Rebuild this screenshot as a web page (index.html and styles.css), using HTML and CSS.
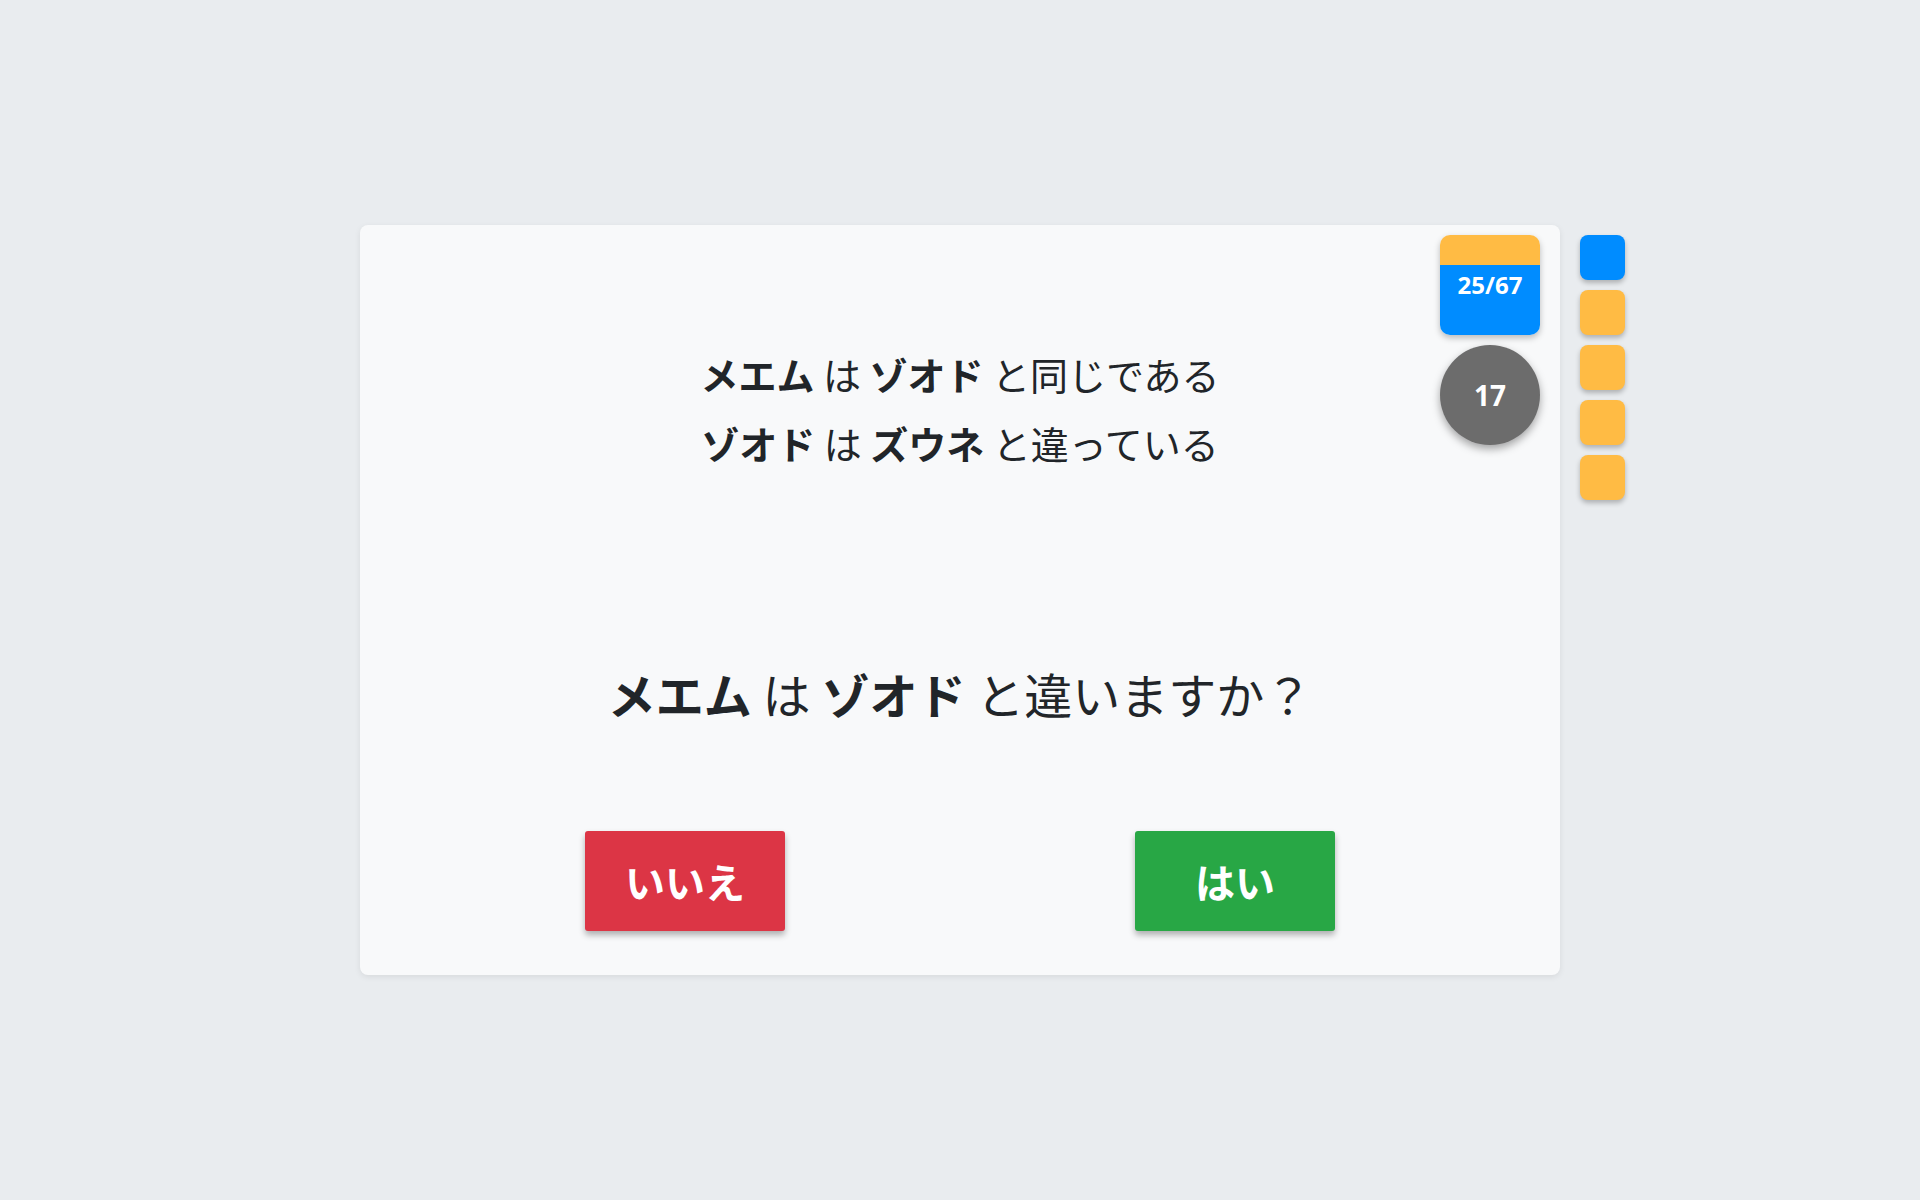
FILE: index.html
```html
<!DOCTYPE html>
<html lang="ja">
<head>
<meta charset="utf-8">
<title>Quiz</title>
<link rel="stylesheet" href="styles.css">
</head>
<body>
<div class="stage">
  <div class="spacer"></div>
  <div class="card">
    <div class="statements">
      <div class="line"><b>メエム</b> は <b>ゾオド</b> と同じである</div>
      <div class="line"><b>ゾオド</b> は <b>ズウネ</b> と違っている</div>
    </div>
    <div class="question"><b>メエム</b> は <b>ゾオド</b> と違いますか？</div>
    <div class="answers">
      <button class="btn btn-no">いいえ</button>
      <button class="btn btn-yes">はい</button>
    </div>
    <div class="status">
      <div class="timer">
        <div class="timer-fill"></div>
        <div class="timer-body">25/67</div>
      </div>
      <div class="count">17</div>
    </div>
  </div>
  <div class="history">
    <div class="dot dot-blue"></div>
    <div class="dot dot-orange"></div>
    <div class="dot dot-orange"></div>
    <div class="dot dot-orange"></div>
    <div class="dot dot-orange"></div>
  </div>
</div>
</body>
</html>
```

FILE: styles.css
```css
html, body {
  margin: 0;
  padding: 0;
}
body {
  background: #e9ecef;
  font-family: "Open Sans", "Noto Sans CJK JP", sans-serif;
  color: #212529;
}
.stage {
  height: 1200px;
  display: grid;
  grid-template-columns: 1fr 1200px 1fr;
  align-items: center;
}
.card {
  position: relative;
  box-sizing: border-box;
  height: 750px;
  background: #f8f9fa;
  border-radius: 8px;
  box-shadow: 0 2px 6px rgba(0, 0, 0, 0.08);
  padding-top: 114px;
  display: flex;
  flex-direction: column;
  align-items: stretch;
}
.statements {
  text-align: center;
  font-size: 38px;
  font-weight: 400;
}
.line {
  height: 69px;
  line-height: 69px;
  font-family: "Noto Sans CJK JP", sans-serif;
}
.line b, .question b {
  font-weight: 700;
}
.question {
  margin-top: 180px;
  height: 72px;
  line-height: 72px;
  text-align: center;
  font-size: 48px;
  font-family: "Noto Sans CJK JP", sans-serif;
}
.answers {
  margin-top: 102px;
  display: flex;
  justify-content: space-between;
  padding: 0 225px;
}
.btn {
  width: 200px;
  height: 100px;
  border: none;
  border-radius: 3px;
  color: #fff;
  font-family: "Noto Sans CJK JP", sans-serif;
  font-size: 40px;
  font-weight: 700;
  box-shadow: 0 4px 6px rgba(0, 0, 0, 0.3);
  padding: 0;
  cursor: pointer;
}
.btn-no {
  background: #dc3545;
}
.btn-yes {
  background: #28a745;
}
.status {
  position: absolute;
  top: 10px;
  right: 20px;
  display: flex;
  flex-direction: column;
  gap: 10px;
}
.timer {
  width: 100px;
  height: 100px;
  border-radius: 10px;
  overflow: hidden;
  display: flex;
  flex-direction: column;
  box-shadow: 0 3px 6px rgba(0, 0, 0, 0.25);
}
.timer-fill {
  height: 30px;
  background: #ffbb44;
}
.timer-body {
  flex: 1;
  background: #008cff;
  color: #fff;
  font-size: 24px;
  font-weight: 700;
  text-align: center;
  line-height: 30px;
  padding-top: 5px;
}
.count {
  width: 100px;
  height: 100px;
  border-radius: 50%;
  background: #6c6c6c;
  color: #fff;
  font-size: 28px;
  font-weight: 700;
  display: flex;
  align-items: center;
  justify-content: center;
  box-shadow: 0 4px 8px rgba(0, 0, 0, 0.35);
}
.history {
  align-self: start;
  margin-top: 235px;
  padding-left: 20px;
  display: flex;
  flex-direction: column;
  gap: 10px;
}
.dot {
  width: 45px;
  height: 45px;
  border-radius: 8px;
  box-shadow: 0 3px 5px rgba(0, 0, 0, 0.25);
}
.dot-blue {
  background: #008cff;
}
.dot-orange {
  background: #ffbb44;
}
```
